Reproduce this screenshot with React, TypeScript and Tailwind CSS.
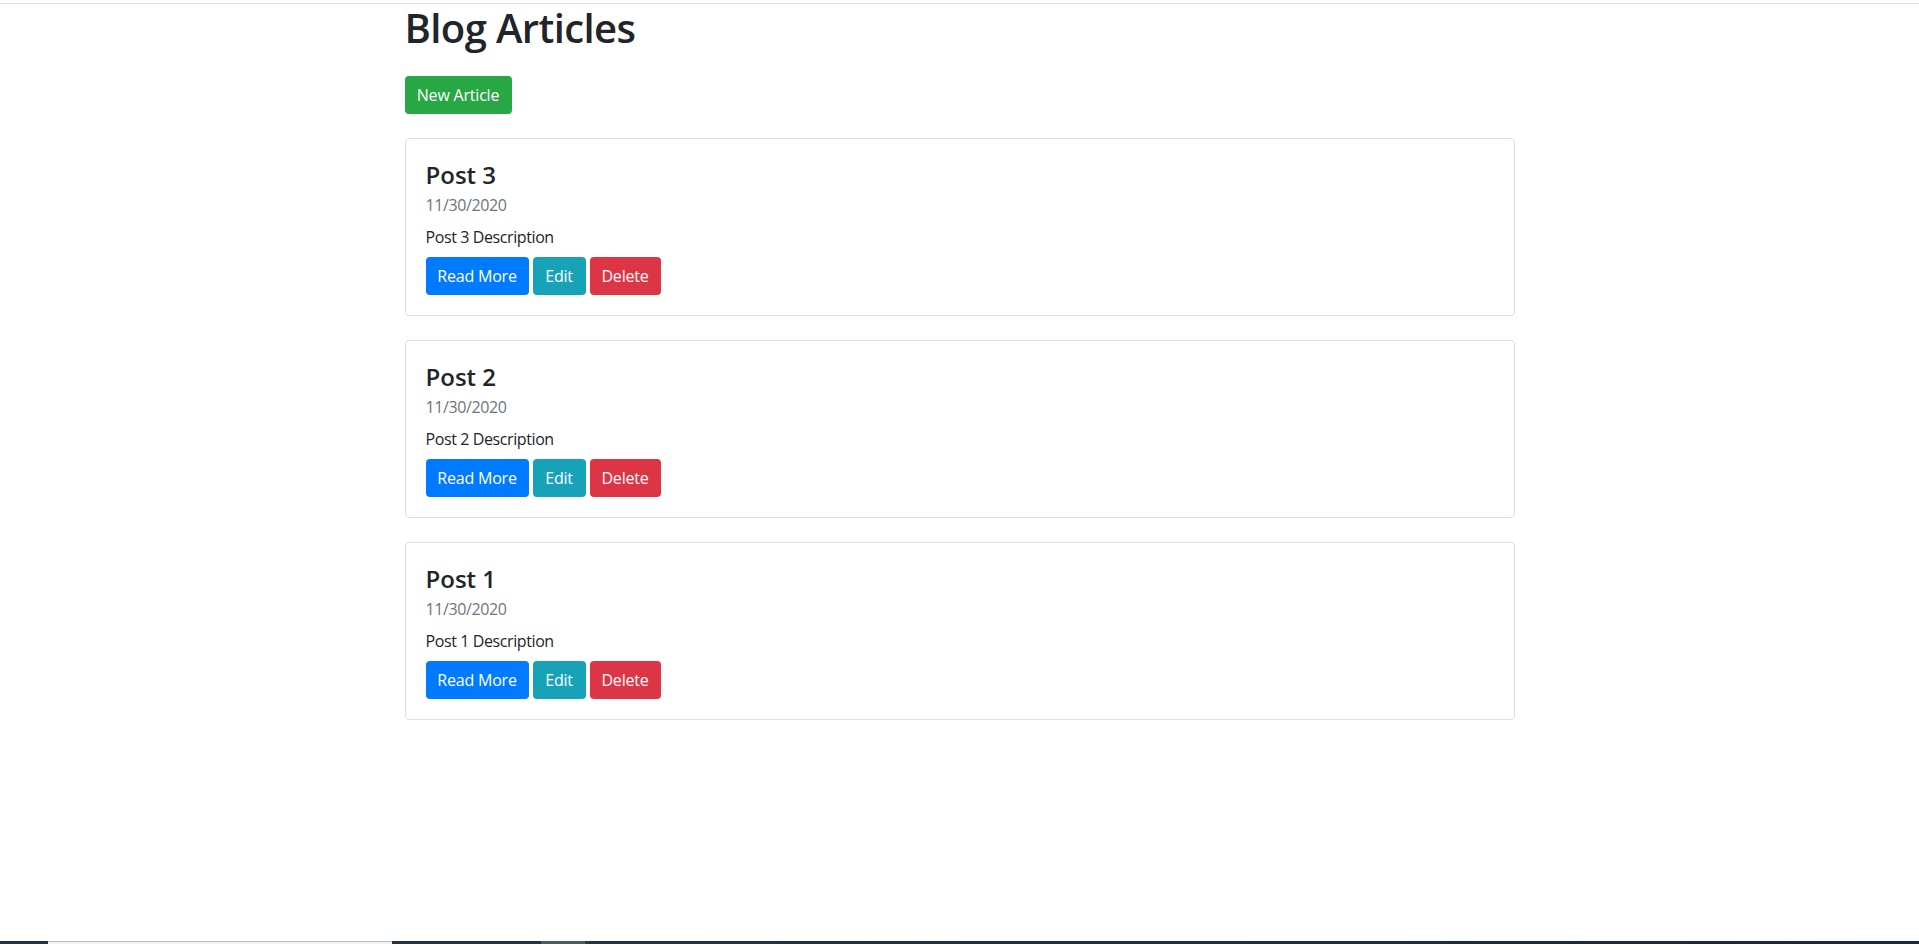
const posts = [
  { id: 3, title: "Post 3", date: "11/30/2020", description: "Post 3 Description" },
  { id: 2, title: "Post 2", date: "11/30/2020", description: "Post 2 Description" },
  { id: 1, title: "Post 1", date: "11/30/2020", description: "Post 1 Description" },
];

const btn =
  "inline-block text-center border border-transparent rounded-[4px] py-1.5 text-base leading-6 text-white tracking-[-0.2px]";

export default function App() {
  return (
    <div className="min-h-screen flex flex-col bg-white text-[#212529] font-['Segoe_UI','Open_Sans',sans-serif]">
      <div className="mt-[3px] h-px bg-[#dfdfdf]" />

      <main className="flex-1 w-[1140px] mx-auto px-[15px]">
        <h1 className="text-[40px] leading-[48px] font-semibold tracking-[-0.6px]">Blog Articles</h1>

        <button className={`${btn} w-[107px] mt-[24px] bg-[#28a745]`}>New Article</button>

        <div className="mt-6 flex flex-col gap-6">
          {posts.map((post) => (
            <div key={post.id} className="border border-[#dfdfdf] rounded-[4px] px-5 pt-[22px] pb-5">
              <h4 className="text-2xl leading-[28.8px] font-semibold mb-3">{post.title}</h4>
              <h6 className="-mt-1.5 mb-[10px] text-base leading-[19.2px] text-[#6c757d] tracking-[-0.4px]">
                {post.date}
              </h6>
              <p className="text-base leading-6 mb-2 tracking-[-0.4px]">{post.description}</p>
              <div className="flex gap-1">
                <button className={`${btn} w-[103px] bg-[#007bff]`}>Read More</button>
                <button className={`${btn} w-[53px] bg-[#17a2b8]`}>Edit</button>
                <button className={`${btn} w-[71px] bg-[#dc3545]`}>Delete</button>
              </div>
            </div>
          ))}
        </div>
      </main>

      {/* taskbar strip at the bottom of the capture */}
      <div className="h-[3px] flex">
        <div className="w-[48px] bg-[#1f3640]" />
        <div className="w-[344px] bg-[#f0f0f0] border-t border-[#bdbdbd]" />
        <div className="w-[149px] bg-[#1f3640]" />
        <div className="w-[44px] bg-[#4b5b62]" />
        <div className="w-[3px] bg-[#2a3b44]" />
        <div className="flex-1 bg-gradient-to-r from-[#1f3640] to-[#1c2539]" />
      </div>
    </div>
  );
}
